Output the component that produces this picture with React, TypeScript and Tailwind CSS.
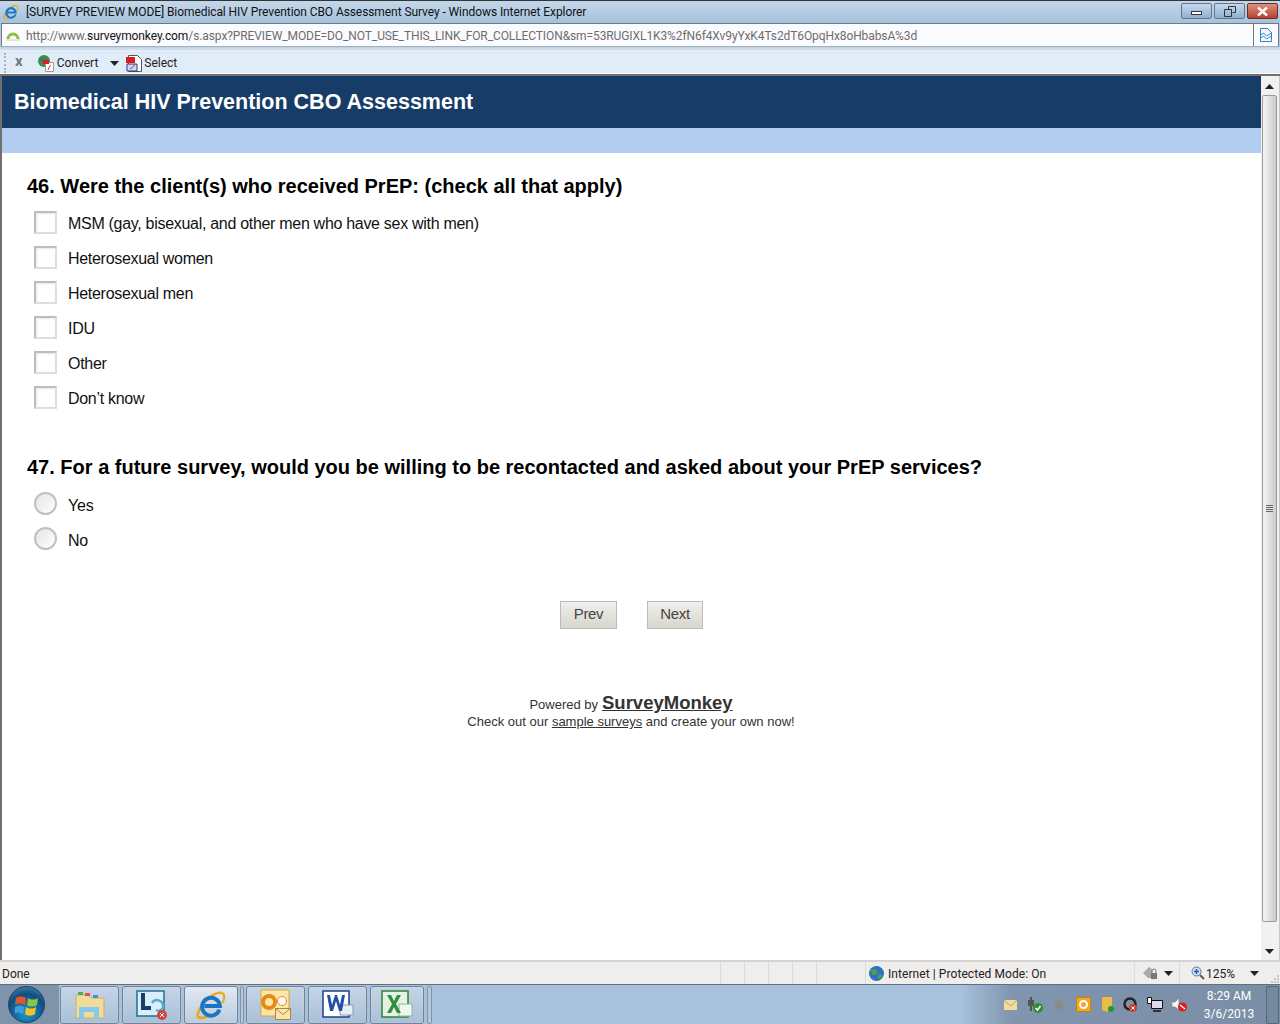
import type { ReactNode } from 'react'

const checkOptions = [
  'MSM (gay, bisexual, and other men who have sex with men)',
  'Heterosexual women',
  'Heterosexual men',
  'IDU',
  'Other',
  'Don’t know',
]

function CaretDown({ className }: { className?: string }) {
  return (
    <svg width="9" height="5" viewBox="0 0 9 5" className={className}>
      <path d="M0 0h9L4.500 5z" fill="#222" />
    </svg>
  )
}

function IeIcon({ size = 16 }: { size?: number }) {
  return (
    <svg width={size} height={size} viewBox="0 0 32 32" fill="none">
      <path d="M27 3C19 2 6 13 2 25c-2 6 6 6 12 2" stroke="#e6a91f" strokeWidth="2.800" />
      <path d="M27 3c4 1 4 6 1 11" stroke="#e6a91f" strokeWidth="2.200" />
      <path d="M25 21A9.500 9.500 0 1 1 25.500 17H9" stroke="#1c74c4" strokeWidth="4.200" />
    </svg>
  )
}

function CheckRow({ label }: { label: string }) {
  return (
    <div className="flex h-[35px] items-center">
      <span className="h-[23px] w-[23px] border-2 border-[#bdbdbd] border-r-[#dedede] border-b-[#dedede] bg-white shadow-[inset_1px_1px_2px_#e8e8e8]" />
      <span className="ml-[11px] pt-[2px] text-[16px] tracking-[-0.3px] text-[#111]">{label}</span>
    </div>
  )
}

function RadioRow({ label }: { label: string }) {
  return (
    <div className="flex h-[35px] items-center">
      <span className="h-[23px] w-[23px] rounded-full border-2 border-[#c0c0c0] bg-gradient-to-br from-[#e4e4e4] to-white" />
      <span className="ml-[11px] pt-[4px] text-[16px] tracking-[-0.2px] text-[#111]">{label}</span>
    </div>
  )
}

function NavButton({ label, width }: { label: string; width: string }) {
  return (
    <button
      className={`flex h-[28px] ${width} items-center justify-center border border-[#bcbcbc] bg-gradient-to-b from-[#f0f0ec] to-[#d6d6ce] pb-[1px] text-[15px] tracking-[-0.3px] text-[#444]`}
    >
      {label}
    </button>
  )
}

function TaskButton({
  children,
  width = 59,
  active = false,
}: {
  children: ReactNode
  width?: number
  active?: boolean
}) {
  return (
    <div
      style={{ width }}
      className={`flex h-[38px] items-center justify-center rounded-[3px] border border-[#6f8296] shadow-[inset_0_0_1px_#fff] ${
        active
          ? 'bg-gradient-to-b from-[#e2e9f1] to-[#bccbdd]'
          : 'bg-gradient-to-b from-[#c6d4e4] to-[#a9c0d8]'
      }`}
    >
      {children}
    </div>
  )
}

function Scrollbar() {
  return (
    <div className="flex w-[19px] flex-col items-center border-r border-[#c8c8c8] bg-[#f1f1f1] pr-[1px]">
      <div className="flex h-[19px] items-center justify-center pt-[1px]">
        <svg width="9" height="5" viewBox="0 0 9 5">
          <path d="M0 5L4.500 0 9 5z" fill="#222" />
        </svg>
      </div>
      <div className="flex h-[827px] w-[15px] items-center justify-center rounded-[2px] border border-[#9a9a9a] bg-gradient-to-r from-[#f4f4f4] to-[#cccccc]">
        <div className="h-[7px] w-[7px] bg-[linear-gradient(#666_1px,transparent_1px)] bg-[length:7px_2px]" />
      </div>
      <div className="mt-auto flex h-[20px] items-center justify-center pt-[2px]">
        <svg width="9" height="5" viewBox="0 0 9 5">
          <path d="M0 0L4.500 5 9 0z" fill="#222" />
        </svg>
      </div>
    </div>
  )
}

export default function App() {
  return (
    <div className="flex h-[1024px] w-[1280px] flex-col overflow-hidden bg-white font-['Liberation_Sans',Arial,sans-serif]">
      {/* Window title bar */}
      <div className="flex h-[23px] items-center border-t border-[#333] bg-gradient-to-b from-[#c4d7ea] to-[#a6c2dc] pl-[3px] font-['Roboto',sans-serif] text-[12px] text-[#111]">
        <IeIcon size={16} />
        <span className="ml-[7px] flex-1 tracking-[-0.08px]">
          [SURVEY PREVIEW MODE] Biomedical HIV Prevention CBO Assessment Survey - Windows Internet Explorer
        </span>
        <div className="mr-[2px] flex gap-[2px] self-start pt-[2px]">
          <div className="flex h-[16px] w-[31px] items-center justify-center rounded-[2px] border border-[#5f7890] bg-gradient-to-b from-[#c6d9ec] to-[#8fb0cf]">
            <span className="mt-[3px] h-[4px] w-[11px] border border-[#334] bg-white" />
          </div>
          <div className="flex h-[16px] w-[31px] items-center justify-center rounded-[2px] border border-[#5f7890] bg-gradient-to-b from-[#c6d9ec] to-[#8fb0cf]">
            <svg width="12" height="11" viewBox="0 0 12 11" fill="none" stroke="#333">
              <path d="M4.500 3V.5h7v6H8.500" />
              <path d="M.5 3.500h7v7h-7z" />
            </svg>
          </div>
          <div className="flex h-[16px] w-[31px] items-center justify-center rounded-[2px] border border-[#6e2a2a] bg-gradient-to-b from-[#dd8f7f] to-[#b8402c]">
            <svg width="11" height="9" viewBox="0 0 11 9" fill="none" stroke="#fff" strokeWidth="2.500">
              <path d="M1 .5l9 8M10 .5l-9 8" />
            </svg>
          </div>
        </div>
      </div>

      {/* Address bar */}
      <div className="flex h-[24px] bg-[#b4cce2] pr-[1px] pl-[1px]">
        <div className="flex h-[24px] flex-1 items-center border border-[#6c7a88] border-b-[#a8b0b8] bg-[#fbfbff] font-['Roboto',sans-serif] text-[12px] text-[#6d6d6d]">
          <svg width="14" height="13" viewBox="0 0 14 13" className="ml-[4px]">
            <path d="M2 10a5 5 0 0 1 10 0" fill="none" stroke="#8cbf3f" strokeWidth="3" />
            <path d="M0 11h14" stroke="#dfe8d0" strokeWidth="2" />
          </svg>
          <span className="ml-[6px] pt-[1px] tracking-[-0.1px]">
            http://www.<span className="text-[#111]">surveymonkey.com</span>/s.aspx?PREVIEW_MODE=DO_NOT_USE_THIS_LINK_FOR_COLLECTION&amp;sm=53RUGIXL1K3%2fN6f4Xv9yYxK4Ts2dT6OpqHx8oHbabsA%3d
          </span>
          <div className="ml-auto flex h-full w-[25px] items-center justify-center border-l border-[#6c7a88]">
            <svg width="12" height="14" viewBox="0 0 12 14" fill="none" stroke="#2a86c8">
              <path d="M.5.500h7l4 4v9H.500z" />
              <path d="M.5 7l3-2 3 3 5-3M.5 10l3-2 3 3 5-3" />
            </svg>
          </div>
        </div>
      </div>

      {/* Command bar */}
      <div className="h-[5px] bg-gradient-to-b from-[#b9cfe6] to-[#edf4fb]" />
      <div className="flex h-[22px] items-center border-t border-b border-t-[#dde4f6] border-b-white bg-[#e1ecf9] font-['Roboto',sans-serif] text-[12px] text-[#222]">
        <div className="ml-[4px] h-full w-[2px] border-l-2 border-dotted border-[#a8b2c0]" />
        <span className="ml-[9px] pb-[3px] text-[15px] leading-none font-bold text-[#777]">x</span>
        <svg width="17" height="17" viewBox="0 0 17 17" className="ml-[15px]">
          <circle cx="6" cy="6" r="6" fill="#3d8f3d" />
          <path d="M2 3h5v3H3zM8 9h3v3H8z" fill="#2b6fb8" />
          <path d="M7.500 7.500h8v9h-8z" fill="#fff" stroke="#999" />
          <path d="M5 5h6v4H5z" fill="#d81e1e" />
          <path d="M10 15c1-3 2-4 3-5" fill="none" stroke="#d81e1e" />
        </svg>
        <span className="ml-[2px]">Convert</span>
        <CaretDown className="ml-[12px]" />
        <svg width="17" height="17" viewBox="0 0 17 17" className="ml-[7px]">
          <path d="M2.500.5h9l4 4v12h-13z" fill="#fff" stroke="#555" />
          <path d="M0 2h9v6H0z" fill="#e01b1b" />
          <path d="M1 9h10v7H1z" fill="#cfd8f0" stroke="#1f3f98" />
          <path d="M4 14c2-1 4-3 5-5" fill="none" stroke="#d81e1e" />
        </svg>
        <span className="ml-[1px]">Select</span>
      </div>

      {/* Browser viewport */}
      <div className="flex min-h-0 flex-1 border-t-2 border-l-2 border-[#707070]">
        <div className="flex flex-1 flex-col">
          <div className="flex h-[52px] items-center bg-[#183c68] pt-[1px] pl-[12px] text-[21.5px] font-bold text-white">
            Biomedical HIV Prevention CBO Assessment
          </div>
          <div className="h-[25px] bg-[#b3cdf1]" />

          <div className="pt-[21px] pl-[25px]">
            <h2 className="text-[20px] leading-[24px] font-bold text-black">
              46. Were the client(s) who received PrEP: (check all that apply)
            </h2>
            <div className="mt-[7px] ml-[7px]">
              {checkOptions.map((option) => (
                <CheckRow key={option} label={option} />
              ))}
            </div>

            <h2 className="mt-[40px] text-[20px] leading-[24px] font-bold text-black">
              47. For a future survey, would you be willing to be recontacted and asked about your PrEP services?
            </h2>
            <div className="mt-[7px] ml-[7px]">
              <RadioRow label="Yes" />
              <RadioRow label="No" />
            </div>
          </div>

          <div className="mt-[45px] ml-[558px] flex gap-[30px]">
            <NavButton label="Prev" width="w-[57px]" />
            <NavButton label="Next" width="w-[56px]" />
          </div>

          <div className="mt-[63px] w-[1258px] text-center text-[13px] leading-[18px] text-[#333]">
            <div className="flex items-baseline justify-center gap-[4px] pt-[2px]">
              Powered by
              <span className="text-[18.5px] leading-[18px] font-bold underline">SurveyMonkey</span>
            </div>
            <div className="-mt-[1px]">
              Check out our <span className="underline">sample surveys</span> and create your own now!
            </div>
          </div>
        </div>
        <Scrollbar />
      </div>

      {/* Status bar */}
      <div className="flex h-[24px] items-center border-t-2 border-[#d4d4d4] bg-[#f0eded] font-['Roboto',sans-serif] text-[12px] text-[#222]">
        <span className="ml-[2px] w-[718px] pt-[1px]">Done</span>
        <div className="h-full w-[24px] border-l border-[#dcdcdc]" />
        <div className="h-full w-[24px] border-l border-[#dcdcdc]" />
        <div className="h-full w-[24px] border-l border-[#dcdcdc]" />
        <div className="h-full w-[24px] border-l border-[#dcdcdc]" />
        <div className="h-full w-[49px] border-l border-[#dcdcdc]" />
        <div className="flex h-full w-[269px] items-center border-l border-[#dcdcdc] pl-[3px]">
          <svg width="15" height="15" viewBox="0 0 15 15">
            <circle cx="7.500" cy="7.500" r="7.500" fill="#2f72c4" />
            <path d="M2 4c3-2 5-1 6 1s-1 4-3 4-3-2-3-5zM9 9c2-1 4-1 4 1s-2 3-3 3-2-3-1-4z" fill="#4da04a" />
          </svg>
          <span className="ml-[4px] pt-[1px] tracking-[0.07px]">Internet | Protected Mode: On</span>
        </div>
        <div className="flex h-full w-[45px] items-center gap-[6px] border-l border-[#dcdcdc] pl-[8px]">
          <svg width="15" height="14" viewBox="0 0 15 14">
            <path d="M0 7l6-6 3 2v9H5z" fill="#aaa" />
            <path d="M9 7V5a2 2 0 0 1 4 0v2" fill="none" stroke="#777" />
            <rect x="8" y="7" width="6" height="6" fill="#777" />
          </svg>
          <CaretDown />
        </div>
        <div className="relative flex h-full flex-1 items-center gap-[1px] border-l border-[#dcdcdc] pl-[11px]">
          <svg width="14" height="14" viewBox="0 0 14 14">
            <circle cx="5.500" cy="5.500" r="4.500" fill="#cfe0f5" stroke="#5a7a9a" />
            <path d="M3 5.500h5M5.500 3v5" stroke="#1f5fb0" strokeWidth="1.500" />
            <path d="M9 9l4 4" stroke="#6b5a3a" strokeWidth="2" />
          </svg>
          <span className="pt-[1px]">125%</span>
          <CaretDown className="ml-[14px]" />
          <svg width="8" height="8" viewBox="0 0 8 8" className="absolute right-[1px] bottom-[1px]">
            <path d="M6 0h2v2H6zM3 3h2v2H3zM6 3h2v2H6zM0 6h2v2H0zM3 6h2v2H3zM6 6h2v2H6z" fill="#c4c4c4" />
          </svg>
        </div>
      </div>

      {/* Windows taskbar */}
      <div className="flex h-[40px] items-center border-t border-[#5d6f82] bg-[linear-gradient(90deg,#a8c2dc_0%,#a8c2dc_75%,#8096ae_79%,#7a8ea6_100%)]">
        <div className="flex h-full w-[59px] items-center bg-[#7e94ab] pl-[8px]">
          <div className="flex h-[37px] w-[37px] items-center justify-center rounded-full border border-[#1f3f5f] bg-[radial-gradient(circle_at_50%_75%,#1f9ad0,#0d4d80_60%,#5f92b8_100%)]">
            <svg width="24" height="22" viewBox="0 0 24 22">
              <path d="M1 4c3-2 7-2 10 0l-1 7c-3-2-7-2-10 0z" fill="#e2552a" />
              <path d="M13 4c3 2 7 2 10 0l-1 7c-3 2-7 2-10 0z" fill="#8cc63f" />
              <path d="M0 13c3-2 6-2 9 0l-1 7c-3-2-6-2-9 0z" fill="#3fa0e0" />
              <path d="M11 13c3 2 7 2 10 0l-1 7c-3 2-7 2-10 0z" fill="#f5c02a" />
            </svg>
          </div>
        </div>
        <div className="ml-[1px] flex items-center gap-[3px]">
          <TaskButton>
            <svg width="32" height="30" viewBox="0 0 32 30">
              <path d="M2 5h12l3 3h13v20H2z" fill="#f1dc9a" stroke="#c8b070" />
              <path d="M4 2h5v3H4z" fill="#4caf50" />
              <path d="M11 3h5v3h-5z" fill="#d9534f" />
              <path d="M19 5h5v3h-5z" fill="#3f8fd8" />
              <path d="M5 28V17h20v11h-5v-6H10v6z" fill="#86c8ee" />
            </svg>
          </TaskButton>
          <TaskButton>
            <svg width="32" height="32" viewBox="0 0 32 32">
              <path d="M1 2h27v25H1z" fill="#d9eef8" stroke="#1e6f9a" strokeWidth="1.500" />
              <path d="M7 4v15h8" fill="none" stroke="#14406b" strokeWidth="4" />
              <path d="M16 14a6 6 0 0 1 11 2c1 4-3 7-7 5" fill="none" stroke="#5aa8cc" strokeWidth="2.500" />
              <circle cx="26" cy="26" r="5" fill="#d8443a" />
              <path d="M24 24l4 4M28 24l-4 4" stroke="#fff" />
            </svg>
          </TaskButton>
          <TaskButton width={54} active>
            <IeIcon size={30} />
          </TaskButton>
          <div className="-mx-[1px] h-[38px] w-[4px] rounded-[2px] border border-[#7f92a6] bg-[#b6c8dc]" />
          <TaskButton>
            <svg width="32" height="32" viewBox="0 0 32 32">
              <path d="M1 1h28v26H1z" fill="#fbe8a8" stroke="#d9a838" />
              <circle cx="9" cy="13" r="6" fill="none" stroke="#e8881a" strokeWidth="4" />
              <circle cx="22" cy="12" r="4.500" fill="#fff" stroke="#e8881a" />
              <path d="M15.500 19.500h15v11h-15z" fill="#fbe6b0" stroke="#a88838" />
              <path d="M15.500 19.500l7.500 6 7.500-6" fill="none" stroke="#a88838" />
            </svg>
          </TaskButton>
          <TaskButton>
            <svg width="32" height="30" viewBox="0 0 32 30">
              <path d="M1 1h26v26H1z" fill="#fff" stroke="#1f3f8f" strokeWidth="1.500" />
              <path d="M18 15h13v10H18z" fill="#e8eef8" stroke="#8a9ab8" />
              <path d="M5 5l3 16h3l3-10 3 10h3l3-16h-3l-2 10-3-10h-2l-3 10-2-10z" fill="#1f4fa8" />
            </svg>
          </TaskButton>
          <TaskButton width={54}>
            <svg width="32" height="30" viewBox="0 0 32 30">
              <path d="M1 1h26v26H1z" fill="#e4f2e4" stroke="#2f7f3f" strokeWidth="1.500" />
              <path d="M18 14h13v12H18z" fill="#eef6ee" stroke="#8ab89a" />
              <path d="M6 5h4l3 6 3-6h4l-5 9 5 9h-4l-3-6-3 6H6l5-9z" fill="#2f8f3f" />
            </svg>
          </TaskButton>
          <div className="h-[38px] w-[5px] rounded-[2px] border border-[#7f92a6] bg-[#b6c8dc]" />
        </div>

        <div className="ml-auto flex items-center">
          <div className="flex items-center">
            <svg width="13" height="10" viewBox="0 0 13 10">
              <path d="M0 0h13v10H0z" fill="#f1dc9a" />
              <path d="M0 0l6.500 6L13 0" fill="none" stroke="#b8a060" />
            </svg>
            <svg width="16" height="16" viewBox="0 0 16 16" className="ml-[10px]">
              <path d="M3 0h2v3H3zM1 3h6v6H5v5H3V9H1z" fill="#555" />
              <circle cx="11" cy="11" r="5" fill="#2f8f2f" />
              <path d="M8.500 11l2 2 3-4" fill="none" stroke="#fff" strokeWidth="1.500" />
            </svg>
            <svg width="12" height="12" viewBox="0 0 12 12" className="ml-[10px]">
              <path d="M6 0l6 6-6 6-6-6z" fill="#8b8b8b" />
            </svg>
            <svg width="15" height="15" viewBox="0 0 15 15" className="ml-[11px]">
              <rect x="0.500" y="0.500" width="14" height="14" fill="#f5a623" stroke="#c9840f" />
              <circle cx="7.500" cy="7.500" r="3.500" fill="none" stroke="#fff" strokeWidth="2" />
            </svg>
            <svg width="12" height="16" viewBox="0 0 12 16" className="ml-[11px]">
              <path d="M0 0h10v10l-5 5-5-2z" fill="#e8bc45" />
              <circle cx="9" cy="12" r="3" fill="#1f9a2f" />
            </svg>
            <svg width="15" height="16" viewBox="0 0 15 16" className="ml-[9px]">
              <circle cx="7" cy="7" r="5.500" fill="none" stroke="#222" strokeWidth="2.500" />
              <circle cx="10" cy="11" r="4" fill="#c8402f" />
              <path d="M8.500 9.500l3 3M11.500 9.500l-3 3" stroke="#fff" />
            </svg>
            <svg width="16" height="15" viewBox="0 0 16 15" className="ml-[9px]">
              <path d="M4.500 3.500h11v8h-11z" fill="#dde" stroke="#111" />
              <path d="M6 14h8" stroke="#111" strokeWidth="1.500" />
              <path d="M0.500 0.500h4v6h-4z" fill="#fff" stroke="#111" />
            </svg>
            <svg width="15" height="14" viewBox="0 0 15 14" className="ml-[9px]">
              <path d="M0 4h3l4-4v12L3 9H0z" fill="#f4f4f4" stroke="#666" strokeWidth="0.500" />
              <circle cx="10.500" cy="9" r="4.500" fill="#e01b1b" />
              <path d="M8 7l5 4" stroke="#fff" strokeWidth="1.500" />
            </svg>
          </div>
          <div className="ml-[12px] w-[60px] text-center font-['Roboto',sans-serif] text-[12px] leading-[18px] text-white">
            <div>8:29 AM</div>
            <div>3/6/2013</div>
          </div>
          <div className="mr-[1px] ml-[7px] h-[38px] w-[13px] rounded-[2px] border border-[#55677a] bg-[#76899d]" />
        </div>
      </div>
    </div>
  )
}
